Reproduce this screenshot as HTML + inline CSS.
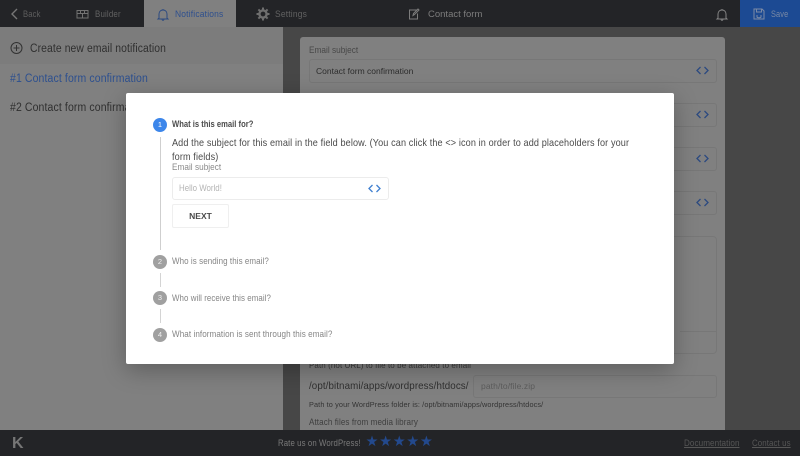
<!DOCTYPE html>
<html><head><meta charset="utf-8"><style>
html,body{margin:0;padding:0;background:#474747}
#root{position:relative;width:800px;height:456px;overflow:hidden;font-family:"Liberation Sans",sans-serif;background:#474747;filter:blur(.3px)}
.a{position:absolute;white-space:nowrap;transform-origin:left center}
.fld{position:absolute;border:1px solid #777;border-radius:3px;box-sizing:border-box}
svg{position:absolute;overflow:visible}
</style></head><body><div id="root">
<!-- left panel -->
<div class="a" style="left:0;top:27px;width:283px;height:403px;background:#808080"></div>
<div class="a" style="left:0;top:27px;width:283px;height:37px;background:#7c7c7c"></div>
<svg style="left:10px;top:41px" width="14" height="14" viewBox="0 0 14 14" fill="none" stroke="#333" stroke-width="1"><circle cx="6.5" cy="7" r="5.5"/><path d="M3.5 7H9.5M6.5 4V10"/></svg>
<div class="a" style="left:30px;top:42px;font-size:11.5px;line-height:14px;color:#2f2f2f;letter-spacing:.12px;transform:scaleX(.9)">Create new email notification</div>
<div class="a" style="left:10px;top:72px;font-size:11.5px;line-height:14px;color:#2c4f8f;letter-spacing:.14px;transform:scaleX(.91)">#1 Contact form confirmation</div>
<div class="a" style="left:10px;top:101px;font-size:11.5px;line-height:14px;color:#2f2f2f;letter-spacing:.14px;transform:scaleX(.91)">#2 Contact form confirmation</div>
<!-- right panel -->
<div class="a" style="left:300px;top:37px;width:425px;height:393px;background:#808080;border-radius:3px 3px 0 0"></div>
<div class="a" style="left:309px;top:45px;font-size:9.200px;line-height:10px;color:#484848;transform:scaleX(.9)">Email subject</div>
<div class="fld" style="left:309px;top:59px;width:408px;height:24px"></div>
<div class="a" style="left:316px;top:66px;font-size:8.5px;line-height:10px;color:#2c2c2c">Contact form confirmation</div>
<div class="fld" style="left:309px;top:103px;width:408px;height:24px"></div>
<div class="fld" style="left:309px;top:147px;width:408px;height:24px"></div>
<div class="fld" style="left:309px;top:191px;width:408px;height:24px"></div>
<div class="fld" style="left:300px;top:236px;width:417px;height:118px;border-radius:4px"></div>
<div class="a" style="left:680px;top:331px;width:36px;height:1px;background:#777"></div>
<svg style="left:696px;top:66px" width="13" height="9" viewBox="0 0 13 9" fill="none" stroke="#2c4a80" stroke-width="1.3"><path d="M4.5 1L1 4.5L4.5 8M8.5 1L12 4.5L8.5 8"/></svg>
<svg style="left:696px;top:110px" width="13" height="9" viewBox="0 0 13 9" fill="none" stroke="#2c4a80" stroke-width="1.3"><path d="M4.5 1L1 4.5L4.5 8M8.5 1L12 4.5L8.5 8"/></svg>
<svg style="left:696px;top:154px" width="13" height="9" viewBox="0 0 13 9" fill="none" stroke="#2c4a80" stroke-width="1.3"><path d="M4.5 1L1 4.5L4.5 8M8.5 1L12 4.5L8.5 8"/></svg>
<svg style="left:696px;top:198px" width="13" height="9" viewBox="0 0 13 9" fill="none" stroke="#2c4a80" stroke-width="1.3"><path d="M4.5 1L1 4.5L4.5 8M8.5 1L12 4.5L8.5 8"/></svg>
<div class="a" style="left:309px;top:360px;font-size:8.5px;line-height:10px;color:#383838;letter-spacing:.1px;transform:scaleX(.94)">Path (not URL) to file to be attached to email</div>
<div class="a" style="left:309px;top:380px;font-size:10.5px;line-height:13px;color:#2f2f2f;letter-spacing:.1px;transform:scaleX(.93)">/opt/bitnami/apps/wordpress/htdocs/</div>
<div class="fld" style="left:473px;top:375px;width:244px;height:23px"></div>
<div class="a" style="left:481px;top:381px;font-size:8.5px;line-height:10px;color:#5c5c5c;letter-spacing:.1px">path/to/file.zip</div>
<div class="a" style="left:309px;top:400px;font-size:7.5px;line-height:10px;color:#333;letter-spacing:.12px;transform:scaleX(.975)">Path to your WordPress folder is: /opt/bitnami/apps/wordpress/htdocs/</div>
<div class="a" style="left:309px;top:417px;font-size:9.500px;line-height:11px;color:#3e3e3e;letter-spacing:.1px;transform:scaleX(.85)">Attach files from media library</div>
<!-- top bar -->
<div class="a" style="left:0;top:0;width:800px;height:27px;background:#232427"></div>
<div class="a" style="left:144px;top:0;width:92px;height:27px;background:#808080"></div>
<div class="a" style="left:740px;top:0;width:60px;height:27px;background:#1c4a93"></div>
<svg style="left:10px;top:8px" width="10" height="12" viewBox="0 0 10 12" fill="none" stroke="#767676" stroke-width="1.4"><path d="M7 1L2 6L7 11"/></svg>
<div class="a" style="left:23px;top:9px;font-size:9.200px;line-height:10px;color:#5e5e5e;letter-spacing:.2px;transform:scaleX(.83)">Back</div>
<svg style="left:76px;top:9px" width="13" height="10" viewBox="0 0 13 10" fill="none" stroke="#727272" stroke-width="1"><path d="M1 1.5H12V9H1ZM1 4.5H12M4.5 1.5V4.5M8.5 1.5V4.5M6.5 4.5V9"/></svg>
<div class="a" style="left:95px;top:9px;font-size:9.200px;line-height:10px;color:#626262;letter-spacing:.2px;transform:scaleX(.86)">Builder</div>
<svg style="left:157px;top:8px" width="12" height="13" viewBox="0 0 12 13" fill="none" stroke="#2c4a80" stroke-width="1"><path d="M2 10V6C2 3.5 3.8 2 6 2S10 3.5 10 6V10L11 11H1ZM5 11.5C5.3 12.6 6.7 12.6 7 11.5M6 1V2"/></svg>
<div class="a" style="left:175px;top:9px;font-size:9.200px;line-height:10px;color:#2d4f8e;letter-spacing:.2px;transform:scaleX(.92)">Notifications</div>
<svg style="left:256px;top:7px" width="14" height="14" viewBox="0 0 14 14" fill="none" stroke="#6e6e6e"><circle cx="7" cy="7" r="3.6" stroke-width="2.4"/><path stroke-width="2" d="M7 .5V2.5M7 11.5V13.5M.5 7H2.5M11.5 7H13.5M2.4 2.4L3.8 3.8M10.2 10.2L11.6 11.6M11.6 2.4L10.2 3.8M3.8 10.2L2.4 11.6"/></svg>
<div class="a" style="left:275px;top:9px;font-size:9.200px;line-height:10px;color:#626262;letter-spacing:.2px;transform:scaleX(.92)">Settings</div>
<svg style="left:408px;top:8px" width="12" height="12" viewBox="0 0 12 12" fill="none" stroke="#7c7c7c" stroke-width="1"><path d="M9 2H1.5V11H9.5V5.5M5 7.5L5.5 5.5L10 1L11 2L6.5 6.5Z"/></svg>
<div class="a" style="left:428px;top:8.5px;font-size:9.5px;line-height:11px;color:#7c7c7c">Contact form</div>
<svg style="left:716px;top:8px" width="12" height="13" viewBox="0 0 12 13" fill="none" stroke="#858585" stroke-width="1"><path d="M2 10V6C2 3.5 3.8 2 6 2S10 3.5 10 6V10L11 11H1ZM5 11.5C5.3 12.6 6.7 12.6 7 11.5M6 1V2"/></svg>
<svg style="left:753px;top:8px" width="12" height="12" viewBox="0 0 12 12" fill="none" stroke="#7b8aa5" stroke-width="1"><path d="M1 1H9L11 3V11H1ZM3.5 1V4H8.5V1M4 7V9C4.5 10 7.5 10 8 9V7"/></svg>
<div class="a" style="left:771px;top:9px;font-size:9.200px;line-height:10px;color:#7b8aa5;letter-spacing:.2px;transform:scaleX(.8)">Save</div>
<!-- bottom bar -->
<div class="a" style="left:0;top:430px;width:800px;height:26px;background:#232427"></div>
<div class="a" style="left:12px;top:435px;font-size:16px;line-height:18px;font-weight:bold;color:#767676">K</div>
<div class="a" style="left:278px;top:438px;font-size:9.200px;line-height:10px;color:#7a7a7a;letter-spacing:.12px;transform:scaleX(.85)">Rate us on WordPress!</div>
<div class="a" style="left:365.500px;top:435px;font-size:14.5px;line-height:15px;letter-spacing:.6px;color:#23498c;font-family:'DejaVu Sans',sans-serif">★★★★★</div>
<div class="a" style="left:684px;top:438px;font-size:9.200px;line-height:10px;color:#565656;text-decoration:underline;letter-spacing:.1px;transform:scaleX(.88)">Documentation</div>
<div class="a" style="left:752px;top:438px;font-size:9.200px;line-height:10px;color:#565656;text-decoration:underline;letter-spacing:.1px;transform:scaleX(.86)">Contact us</div>
<!-- modal -->
<div class="a" style="left:126px;top:93px;width:548px;height:271px;background:#fff;border-radius:2px;box-shadow:0 6px 24px rgba(0,0,0,.28)"></div>
<div class="a" style="left:153px;top:118px;width:14px;height:14px;border-radius:50%;background:#3c86ea;color:#fff;font-size:7.5px;line-height:14px;text-align:center">1</div>
<div class="a" style="left:171.500px;top:119px;font-size:9.200px;line-height:11px;font-weight:bold;color:#4c4c4c;transform:scaleX(.83)">What is this email for?</div>
<div class="a" style="left:160px;top:137px;width:1px;height:113px;background:#cfcfcf"></div>
<div class="a" style="left:172px;top:136.500px;font-size:10.300px;line-height:14px;color:#4a4a4a;letter-spacing:.13px;transform:scaleX(.884)">Add the subject for this email in the field below. (You can click the &lt;&gt; icon in order to add placeholders for your</div>
<div class="a" style="left:172px;top:150.500px;font-size:10.300px;line-height:14px;color:#4a4a4a;letter-spacing:.13px;transform:scaleX(.884)">form fields)</div>
<div class="a" style="left:172px;top:162px;font-size:9.200px;line-height:11px;color:#8a8a8a;letter-spacing:.05px;transform:scaleX(.89)">Email subject</div>
<div class="fld" style="left:172px;top:177px;width:217px;height:23px;border-color:#ececec"></div>
<div class="a" style="left:179px;top:183px;font-size:9.200px;line-height:11px;color:#b4b4b4;transform:scaleX(.86)">Hello World!</div>
<svg style="left:368px;top:183.500px" width="13" height="9" viewBox="0 0 13 9" fill="none" stroke="#3f7fd0" stroke-width="1.3"><path d="M4.5 1L1 4.5L4.5 8M8.5 1L12 4.5L8.5 8"/></svg>
<div class="a" style="left:172px;top:204px;width:57px;height:24px;border:1px solid #efefef;border-radius:2px;box-sizing:border-box;font-size:8.5px;line-height:22px;font-weight:bold;color:#4a4a4a;text-align:center">NEXT</div>
<div class="a" style="left:153px;top:255px;width:14px;height:14px;border-radius:50%;background:#a0a0a0;color:#eee;font-size:7.5px;line-height:14px;text-align:center">2</div>
<div class="a" style="left:171.500px;top:256px;font-size:9.200px;line-height:11px;color:#858585;letter-spacing:.08px;transform:scaleX(.87)">Who is sending this email?</div>
<div class="a" style="left:160px;top:273px;width:1px;height:14px;background:#d4d4d4"></div>
<div class="a" style="left:153px;top:291px;width:14px;height:14px;border-radius:50%;background:#a0a0a0;color:#eee;font-size:7.5px;line-height:14px;text-align:center">3</div>
<div class="a" style="left:171.500px;top:293px;font-size:9.200px;line-height:11px;color:#858585;letter-spacing:.08px;transform:scaleX(.86)">Who will receive this email?</div>
<div class="a" style="left:160px;top:309px;width:1px;height:14px;background:#d4d4d4"></div>
<div class="a" style="left:153px;top:328px;width:14px;height:14px;border-radius:50%;background:#a0a0a0;color:#eee;font-size:7.5px;line-height:14px;text-align:center">4</div>
<div class="a" style="left:171.500px;top:329px;font-size:9.200px;line-height:11px;color:#858585;letter-spacing:.08px;transform:scaleX(.88)">What information is sent through this email?</div>
</div></body></html>
